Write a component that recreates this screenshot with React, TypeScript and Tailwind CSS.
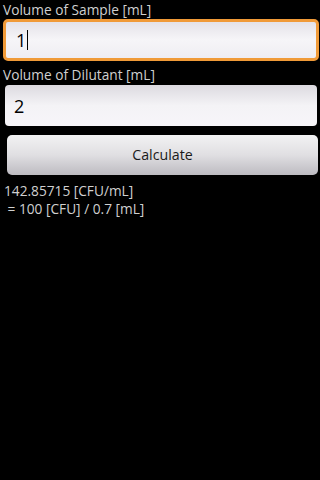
import React from "react";

export default function App() {
  return (
    <div
      className="w-[320px] h-[480px] bg-black overflow-hidden"
      style={{ fontFamily: '"Open Sans", "Noto Sans", sans-serif' }}
    >
      <div className="pl-[3px] pt-[1px] h-[19px] text-[13.7px] leading-[18px] text-[#d0d0d0]">
        Volume of Sample [mL]
      </div>
      <div className="ml-[3px] mr-[1px] h-[42px] rounded-[5px] border-[3px] border-[#f09a38] bg-gradient-to-b from-[#e4e2e8] via-[#f6f5f8] to-[#efedf2] flex items-center pl-[10px]">
        <span className="text-[18px] leading-[22px] text-black">1</span>
        <span className="w-[1px] h-[20px] bg-black ml-[1px]" />
      </div>
      <div className="pl-[3px] pt-[5px] h-[24px] text-[13.7px] leading-[18px] text-[#d0d0d0]">
        Volume of Dilutant [mL]
      </div>
      <div className="ml-[5px] mr-[3px] h-[41px] rounded-[4px] bg-gradient-to-b from-[#dcdae0] via-[#f4f3f6] to-[#f7f5f9] flex items-center pl-[9px]">
        <span className="text-[18px] leading-[22px] text-black">2</span>
      </div>
      <div className="ml-[7px] mr-[2px] mt-[9px] h-[40px] rounded-[5px] bg-gradient-to-b from-[#f2f2f3] via-[#e0dfe2] to-[#bdbbc1] flex items-center justify-center">
        <span className="text-[14.2px] leading-[20px] text-[#1a1a1a]">Calculate</span>
      </div>
      <div className="pl-[4px] pt-[7px] text-[13.7px] leading-[18px] text-[#d0d0d0]">
        <div>142.85715 [CFU/mL]</div>
        <div>&nbsp;= 100 [CFU] / 0.7 [mL]</div>
      </div>
    </div>
  );
}
